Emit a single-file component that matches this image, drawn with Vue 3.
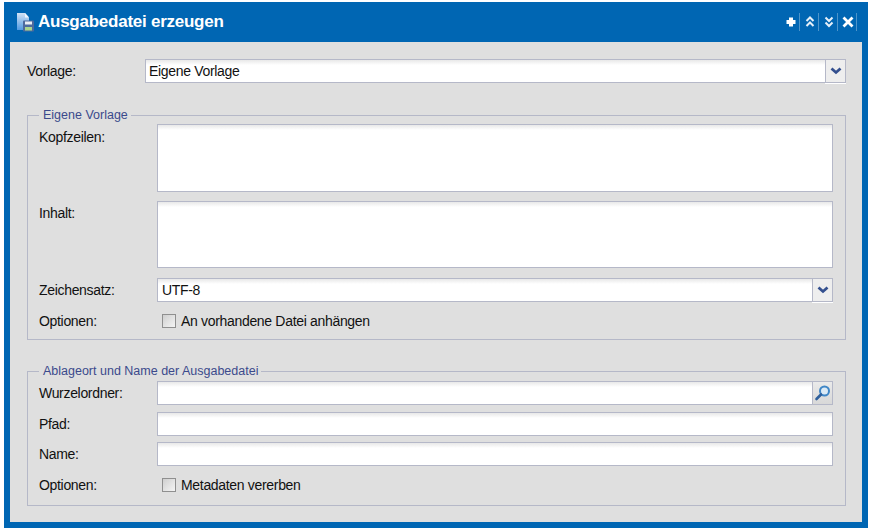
<script setup>
const charset = 'UTF-8'
</script>

<template>
  <div class="window">
    <header class="head">
      <svg class="logo" width="18" height="19" viewBox="0 0 18 19">
        <defs>
          <linearGradient id="docFill" x1="0" y1="0" x2="0" y2="1">
            <stop offset="0" stop-color="#d3e2f4" />
            <stop offset="1" stop-color="#4f9ae2" />
          </linearGradient>
        </defs>
        <path d="M1 0h8l4 4.500V17H1z" fill="url(#docFill)" />
        <path d="M9 0l4 4.500H9z" fill="#f2f7fd" />
        <rect x="7" y="7.500" width="11" height="11" rx="1" fill="#4c6a9e" />
        <rect x="9" y="8.500" width="7" height="3" fill="#e9eef5" />
        <rect x="9" y="14" width="7" height="3.500" fill="#a9d48c" />
      </svg>
      <h1 class="title">Ausgabedatei erzeugen</h1>
      <div class="tools">
        <span class="tool">
          <svg width="12" height="12" viewBox="0 0 12 12"><path d="M4 1.500h4V4h2.500v4H8v2.500H4V8H1.500V4H4z" fill="#fff" /></svg>
        </span>
        <span class="tool">
          <svg width="12" height="12" viewBox="0 0 12 12" fill="none" stroke="#e6f0f9" stroke-width="2"><path d="M2.500 5l3.500-3.500L9.500 5M2.500 10l3.500-3.500L9.500 10" /></svg>
        </span>
        <span class="tool">
          <svg width="12" height="12" viewBox="0 0 12 12" fill="none" stroke="#e6f0f9" stroke-width="2"><path d="M2.500 1.500L6 5l3.500-3.500M2.500 6.500L6 10l3.500-3.500" /></svg>
        </span>
        <span class="tool">
          <svg width="12" height="12" viewBox="0 0 12 12" fill="none" stroke="#fff" stroke-width="2.800"><path d="M1.500 1.500l9 9M10.500 1.500l-9 9" /></svg>
        </span>
      </div>
    </header>

    <main class="body">
      <div class="row top-row">
        <label class="label top-label">Vorlage:</label>
        <div class="field">
          <span class="value top-value">Eigene Vorlage</span>
          <span class="trigger drop">
            <svg width="14" height="10" viewBox="0 0 14 10" fill="none" stroke="#34508f" stroke-width="2.800"><path d="M2.500 2.500l4.500 4 4.500-4" /></svg>
          </span>
        </div>
      </div>

      <fieldset class="group first">
        <legend>Eigene Vorlage</legend>
        <div class="row area-row">
          <label class="label">Kopfzeilen:</label>
          <div class="area"></div>
        </div>
        <div class="row area-row second-area">
          <label class="label">Inhalt:</label>
          <div class="area"></div>
        </div>
        <div class="row charset-row">
          <label class="label">Zeichensatz:</label>
          <div class="field">
            <span class="value">{{ charset }}</span>
            <span class="trigger drop">
              <svg width="14" height="10" viewBox="0 0 14 10" fill="none" stroke="#34508f" stroke-width="2.800"><path d="M2.500 2.500l4.500 4 4.500-4" /></svg>
            </span>
          </div>
        </div>
        <div class="row option-row">
          <label class="label">Optionen:</label>
          <span class="check"></span>
          <span class="check-text">An vorhandene Datei anhängen</span>
        </div>
      </fieldset>

      <fieldset class="group second">
        <legend>Ablageort und Name der Ausgabedatei</legend>
        <div class="row">
          <label class="label">Wurzelordner:</label>
          <div class="field">
            <span class="value"></span>
            <span class="trigger search">
              <svg width="18" height="18" viewBox="0 0 18 18" fill="none">
                <circle cx="10.500" cy="7" r="4.500" fill="#dbeaf6" stroke="#3f86c6" stroke-width="2" />
                <path d="M7 10.500l-4.500 4.500" stroke="#2f5f9c" stroke-width="2.600" stroke-linecap="round" />
              </svg>
            </span>
          </div>
        </div>
        <div class="row path-row">
          <label class="label">Pfad:</label>
          <div class="field"></div>
        </div>
        <div class="row name-row">
          <label class="label">Name:</label>
          <div class="field"></div>
        </div>
        <div class="row option-row">
          <label class="label">Optionen:</label>
          <span class="check"></span>
          <span class="check-text">Metadaten vererben</span>
        </div>
      </fieldset>
    </main>
  </div>
</template>

<style scoped>
.window {
  box-sizing: border-box;
  width: 864px;
  height: 526px;
  margin: 2px 0 0 4px;
  padding: 0 6px 6px;
  background: #0066b3;
  display: flex;
  flex-direction: column;
  font-family: "Liberation Sans", Arial, sans-serif;
  font-size: 14px;
  letter-spacing: -0.32px;
  color: #111;
}
.head {
  height: 40px;
  display: flex;
  align-items: center;
}
.logo {
  margin-left: 6px;
  margin-top: 1px;
}
.title {
  margin: 0 0 1px 4px;
  font-size: 17px;
  font-weight: 700;
  letter-spacing: -0.25px;
  color: #fff;
  flex: 1;
}
.tools {
  display: flex;
  margin-right: 5px;
}
.tool {
  box-sizing: border-box;
  width: 19px;
  height: 18px;
  padding-left: 2px;
  display: flex;
  align-items: center;
  justify-content: center;
  border-right: 1px solid #4d94ca;
}
.body {
  flex: 1;
  background: #dfdfdf;
  padding: 17px 16px 0 17px;
}
.row {
  display: flex;
  align-items: center;
}
.label {
  width: 118px;
  flex: none;
}
.top-label {
  line-height: 24px;
}
.field {
  box-sizing: border-box;
  flex: 1;
  height: 24px;
  border: 1px solid #b5b8c8;
  background: linear-gradient(#e8e8e8, #fff 5px);
  display: flex;
  align-items: stretch;
}
.value {
  flex: 1;
  padding-left: 4px;
  line-height: 22px;
}
.top-value {
  padding-left: 3px;
}
.trigger {
  width: 19px;
  flex: none;
  background: #eeeeee;
  border-left: 1px solid #b5b8c8;
  display: flex;
  align-items: center;
  justify-content: center;
}
.drop {
  position: relative;
}
.drop::after {
  content: "";
  position: absolute;
  left: -1px;
  right: -1px;
  bottom: -2px;
  height: 1px;
  background: #fff;
}
.search {
  background: linear-gradient(#eaeaea, #d8d8d8);
}
.group {
  margin: 0;
  padding: 2px 12px 0 11px;
  border: 1px solid #b5b8c8;
  min-width: 0;
}
.first {
  margin-top: 25px;
  height: 228px;
}
.second {
  margin-top: 24px;
  height: 137px;
  padding-top: 3px;
}
legend {
  padding: 0 3px 0 4px;
  font-size: 12.5px;
  letter-spacing: 0;
  line-height: 14px;
  color: #3b4a8c;
}
.area-row {
  align-items: flex-start;
}
.area-row .label {
  line-height: 26px;
}
.area {
  box-sizing: border-box;
  flex: 1;
  height: 68px;
  border: 1px solid #b5b8c8;
  background: linear-gradient(#e8e8e8, #fff 5px);
}
.second-area {
  margin-top: 9px;
}
.second-area .label {
  line-height: 25px;
}
.second-area .area {
  height: 67px;
}
.charset-row {
  margin-top: 10px;
}
.option-row {
  margin-top: 7px;
  height: 24px;
}
.path-row {
  margin-top: 7px;
}
.name-row {
  margin-top: 6px;
}
.check {
  box-sizing: border-box;
  width: 14px;
  height: 14px;
  margin-left: 5px;
  border: 1px solid #8f8f8f;
  background: linear-gradient(135deg, #cfcfcf, #f4f4f4);
}
.check-text {
  margin-left: 5px;
}
</style>

<style>
html, body {
  background: #fff;
}
</style>
